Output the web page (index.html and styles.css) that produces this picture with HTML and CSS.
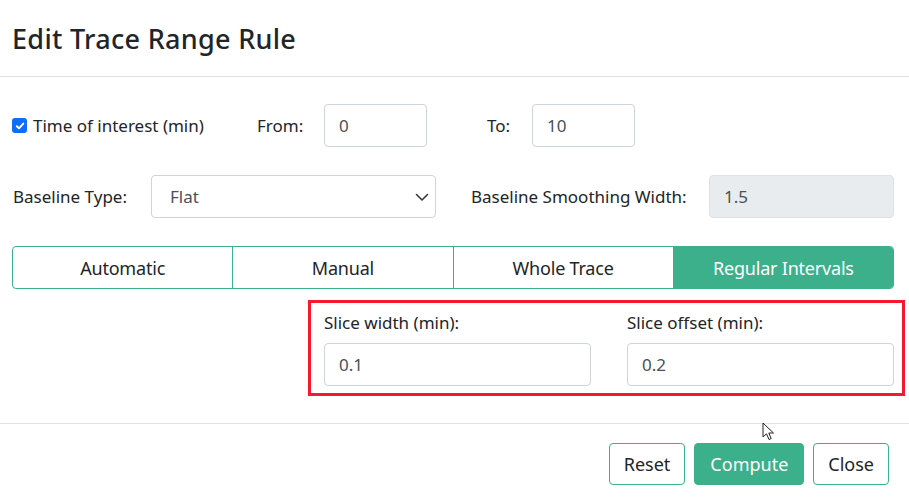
FILE: index.html
```html
<!DOCTYPE html>
<html lang="en">
<head>
    <meta charset="UTF-8">
    <meta name="viewport" content="width=device-width, initial-scale=1.0">
    <title>Edit Trace Range Rule</title>
    <link rel="stylesheet" href="styles.css">
</head>
<body>
    <div class="modal">
        <div class="modal-header">
            <h5 class="modal-title">Edit Trace Range Rule</h5>
        </div>
        <div class="modal-body">
            <div class="form-row">
                <label class="check">
                    <span class="check-box">
                        <svg width="10" height="10" viewBox="0 0 10 10"><path d="M1.8 5.2 L4 7.3 L8.3 2.6" fill="none" stroke="#fff" stroke-width="1.9" stroke-linecap="round" stroke-linejoin="round"/></svg>
                    </span>
                    Time of interest (min)
                </label>
                <span class="label from-label">From:</span>
                <input class="field small" type="text" value="0">
                <span class="label to-label">To:</span>
                <input class="field small" type="text" value="10">
            </div>
            <div class="form-row">
                <span class="label type-label">Baseline Type:</span>
                <div class="select">
                    <span>Flat</span>
                    <svg width="16" height="16" viewBox="0 0 16 16"><path d="M2.5 5.5 L8 11 L13.5 5.5" fill="none" stroke="#343a40" stroke-width="1.6" stroke-linecap="round" stroke-linejoin="round"/></svg>
                </div>
                <span class="label smooth-label">Baseline Smoothing Width:</span>
                <input class="field disabled" type="text" value="1.5" disabled>
            </div>
            <div class="tabs">
                <div class="tab">Automatic</div>
                <div class="tab">Manual</div>
                <div class="tab">Whole Trace</div>
                <div class="tab active">Regular Intervals</div>
            </div>
            <div class="slices">
                <div class="slice">
                    <span class="slice-label">Slice width (min):</span>
                    <input class="field" type="text" value="0.1">
                </div>
                <div class="slice">
                    <span class="slice-label">Slice offset (min):</span>
                    <input class="field" type="text" value="0.2">
                </div>
            </div>
        </div>
        <div class="modal-footer">
            <button class="btn outline">Reset</button>
            <button class="btn primary">Compute</button>
            <button class="btn outline">Close</button>
        </div>
        <svg class="cursor" width="14" height="20" viewBox="0 0 14 20"><path d="M1 1 L1 15 L4.5 11.8 L7 17.5 L9.2 16.5 L6.8 11 L11.5 11 Z" fill="#fff" stroke="#222" stroke-width="1" stroke-linejoin="round"/></svg>
    </div>
</body>
</html>
```

FILE: styles.css
```css
body {
    font-family: "Noto Sans", Arial, sans-serif;
    color: #212529;
    background: #ffffff;
    margin: 0;
}

.modal {
    position: relative;
    width: 909px;
    height: 499px;
}

.modal-header {
    height: 77px;
    box-sizing: border-box;
    padding: 0 12px;
    display: flex;
    align-items: center;
    border-bottom: 1px solid #dee2e6;
}

.modal-title {
    margin: 0;
    font-size: 27px;
    font-weight: 500;
    color: #212529;
    letter-spacing: 0.3px;
}

.modal-body {
    padding: 27px 15px 0 12px;
    height: 347px;
    box-sizing: border-box;
    border-bottom: 1px solid #dee2e6;
}

.form-row {
    display: flex;
    align-items: center;
    height: 43px;
    margin-bottom: 28px;
    font-size: 17px;
}

.check {
    display: flex;
    align-items: center;
    width: 245px;
    color: #212529;
}

.check-box {
    width: 15px;
    height: 15px;
    border-radius: 3px;
    background: #0d6efd;
    display: flex;
    align-items: center;
    justify-content: center;
    margin-right: 6px;
}

.label {
    color: #212529;
}

.from-label {
    width: 67px;
}

.to-label {
    margin-left: 60px;
    width: 45px;
}

.type-label {
    width: 138px;
    margin-left: 1px;
}

.smooth-label {
    margin-left: 35px;
    width: 238px;
}

.field {
    font-family: inherit;
    font-size: 17px;
    color: #495057;
    height: 43px;
    box-sizing: border-box;
    padding: 0 14px;
    border: 1px solid #ced4da;
    border-radius: 4px;
    background: #ffffff;
    outline: none;
}

.field.small {
    width: 103px;
}

.field.disabled {
    width: 185px;
    background: #e9ecef;
    border-color: #dee2e6;
}

.select {
    width: 285px;
    height: 43px;
    box-sizing: border-box;
    border: 1px solid #ced4da;
    border-radius: 4px;
    display: flex;
    align-items: center;
    justify-content: space-between;
    padding: 0 5px 0 18px;
    color: #495057;
}

.tabs {
    display: flex;
    height: 43px;
    border: 1px solid #3bb08b;
    border-radius: 4px;
    overflow: hidden;
    box-sizing: border-box;
    width: 882px;
}

.tab {
    flex: 1;
    display: flex;
    align-items: center;
    justify-content: center;
    font-size: 18px;
    color: #212529;
    border-left: 1px solid #3bb08b;
    letter-spacing: -0.2px;
}

.tab:first-child {
    border-left: none;
}

.tab.active {
    background: #3bb08b;
    color: #ffffff;
}

.slices {
    margin: 11px -11px 0 296px;
    border: 3px solid #f5192f;
    height: 96px;
    box-sizing: border-box;
    display: flex;
    gap: 36px;
    padding: 9px 8px 0 13px;
}

.slice {
    display: flex;
    flex-direction: column;
    width: 267px;
}

.slice-label {
    font-size: 17px;
    color: #212529;
    margin-bottom: 9px;
    line-height: 22px;
}

.slice .field {
    width: 267px;
}

.modal-footer {
    display: flex;
    justify-content: flex-end;
    gap: 9px;
    padding: 19px 20px 0 0;
}

.btn {
    font-family: inherit;
    font-size: 18px;
    height: 42px;
    box-sizing: border-box;
    padding: 0 14px;
    border-radius: 4px;
    border: 1px solid #3bb08b;
    background: #ffffff;
    color: #212529;
}

.btn.primary {
    background: #3bb08b;
    color: #ffffff;
    padding: 0 15px;
}

.cursor {
    position: absolute;
    left: 762px;
    top: 422px;
}
```
